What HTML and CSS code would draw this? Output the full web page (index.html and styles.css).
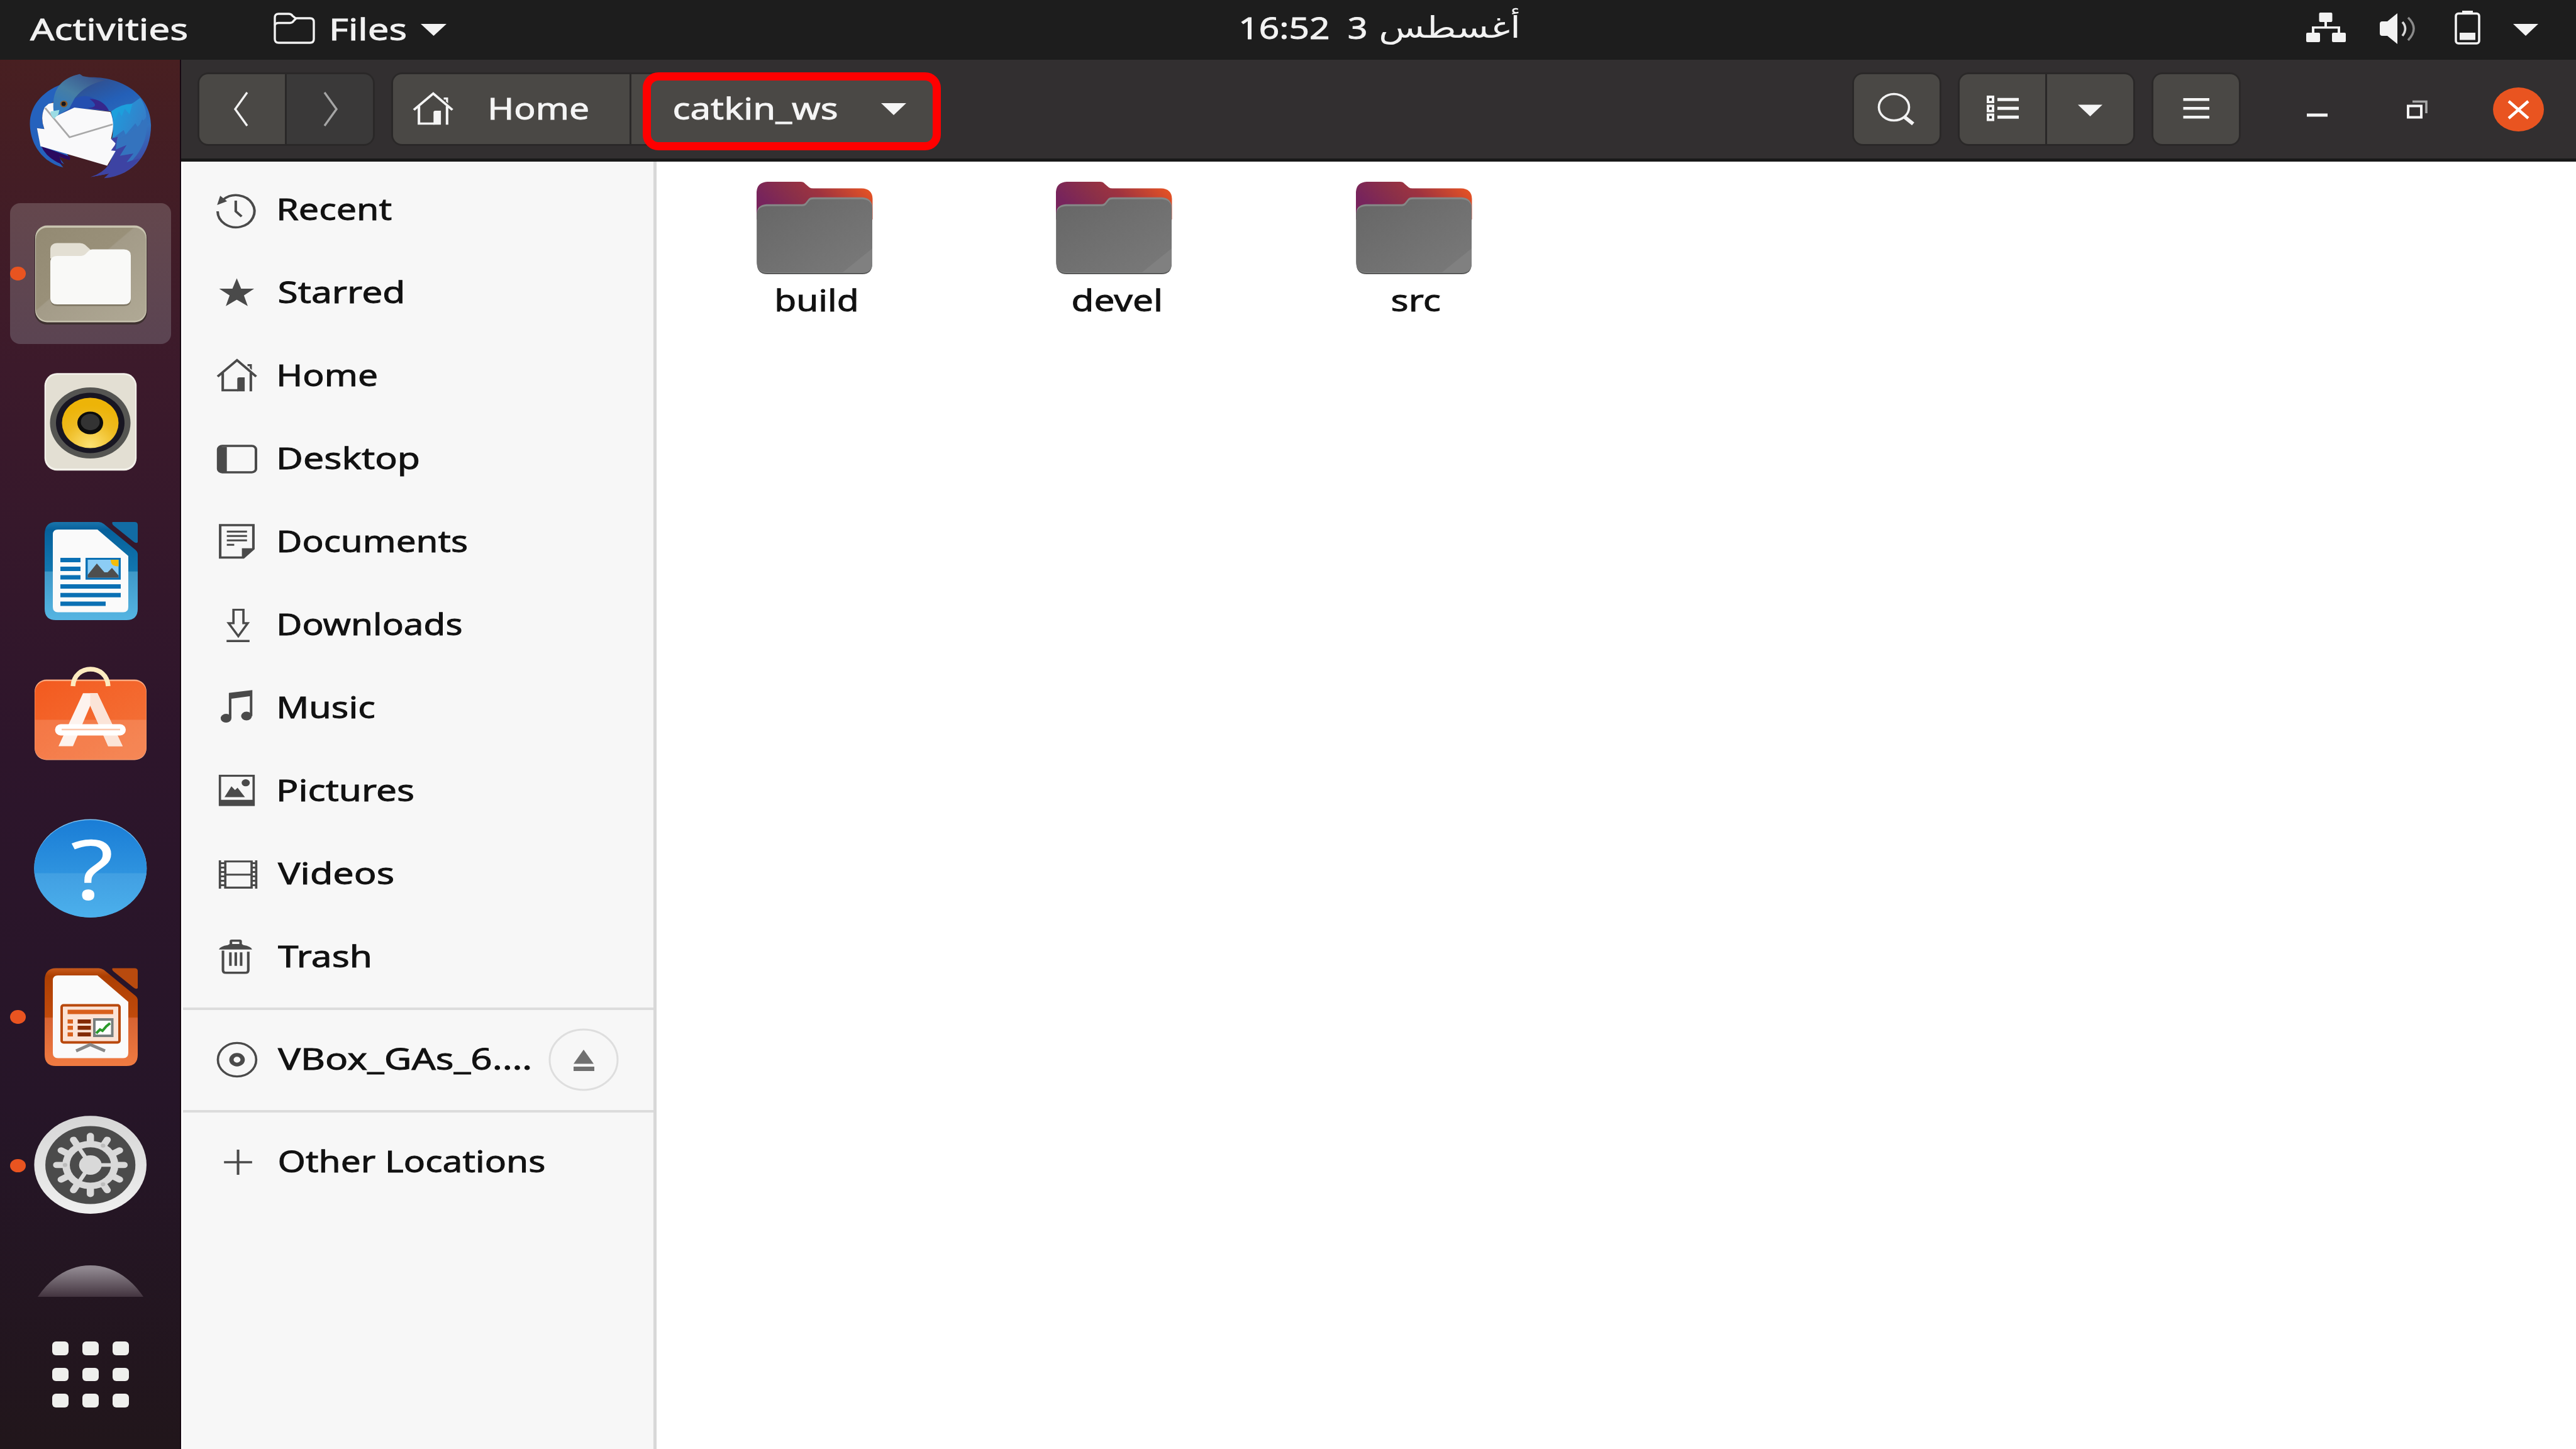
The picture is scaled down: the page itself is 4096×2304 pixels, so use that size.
FILE: index.html
```html
<!DOCTYPE html>
<html lang="en">
<head>
<meta charset="utf-8">
<title>catkin_ws</title>
<link rel="stylesheet" href="styles.css">
</head>
<body>
<header class="topbar">
  <span class="label activities" data-w="251">Activities</span>
  <svg class="app-icon" width="66" height="50" viewBox="0 0 66 50"><g fill="none" stroke="#f2f2f2" stroke-width="3.4"><path d="M2 42V8Q2 2 8 2H24Q28 2 30 5L35 9H58Q64 9 64 15V42Q64 48 58 48H8Q2 48 2 42Z"/><path d="M2 20Q3 16.500 8 16.500H26Q30 16.500 32 13L36 9"/></g></svg>
  <span class="label" data-w="119">Files</span>
  <svg class="app-caret" width="41" height="19" viewBox="0 0 41 19"><path d="M0 0H41L20.500 19Z" fill="#f2f2f2"/></svg>
  <div class="clock">
    <span class="label" data-w="140">16:52</span>
    <span class="label" data-w="29">3</span>
    <span class="label arabic" data-w="221" lang="ar">أغسطس</span>
  </div>
  <div class="tray">
    <svg width="63" height="94" viewBox="0 0 63 94" fill="#f2f2f2"><rect x="20.500" y="20" width="21" height="15" rx="2"/><rect x="0" y="52" width="22" height="15" rx="2"/><rect x="41" y="52" width="22" height="15" rx="2"/><path d="M29 34h4v8h21v11h-4v-7.500H13V53H9V42h20z"/></svg>
    <svg width="61" height="94" viewBox="0 0 61 94"><path d="M1 38Q1 34 5 34H13L29 21V70L13 57H5Q1 57 1 53Z" fill="#f2f2f2"/><path d="M37 35Q46 45 37 57" fill="none" stroke="#d8d8d8" stroke-width="3.600"/><path d="M46 28Q64 45 46 64" fill="none" stroke="#8a8a8a" stroke-width="3.600"/></svg>
    <svg width="41" height="94" viewBox="0 0 41 94"><path d="M12 21V17H29V21" fill="#f2f2f2"/><rect x="2" y="21.500" width="37" height="47.500" rx="4" fill="none" stroke="#f2f2f2" stroke-width="3.600"/><rect x="8" y="52" width="25" height="11.500" fill="#f2f2f2"/></svg>
    <svg width="40" height="94" viewBox="0 0 40 94"><path d="M0 38H40L20 57Z" fill="#f2f2f2"/></svg>
  </div>
</header>
<div class="desktop">
  <nav class="dock">
    <div class="tile">
      <svg width="214" height="186" viewBox="0 0 690 600">
        <defs>
          <linearGradient id="tb-body" x1="0.300" y1="0" x2="0.700" y2="1"><stop offset="0" stop-color="#35497f"/><stop offset=".32" stop-color="#2460b8"/><stop offset=".65" stop-color="#3374c0"/><stop offset="1" stop-color="#4040a0"/></linearGradient>
          <linearGradient id="tb-head" x1="0.800" y1="0" x2="0.100" y2="1"><stop offset="0" stop-color="#39508a"/><stop offset=".5" stop-color="#467ea4"/><stop offset="1" stop-color="#2d78c4"/></linearGradient>
          <linearGradient id="tb-wing" x1="0" y1="0" x2="1" y2="0.400"><stop offset="0" stop-color="#1ba0e0"/><stop offset="1" stop-color="#357fc8"/></linearGradient>
        </defs>
        <path d="M195 90C90 130 30 210 34 300C38 410 110 495 205 517L175 480L210 500L180 462L240 475L215 430L90 405L70 315L108 320Q85 260 110 210L155 180Z" fill="#2562bd"/>
        <path d="M92 408L240 462L238 480L185 462L200 502Q120 470 92 408Z" fill="#2a0a60"/>
        <path d="M155 180Q180 60 290 38L310 55C510 40 655 150 655 300C655 450 560 560 415 572L440 548L345 566Q410 550 440 500L470 430L450 230L250 210L170 250Z" fill="url(#tb-body)"/>
        <path d="M245 175Q310 130 370 168Q425 190 440 225L260 212L170 255Z" fill="#244fb0"/>
        <path d="M340 165Q410 165 440 228L330 212Q400 208 340 165Z" fill="#36278c"/>
        <path d="M130 190L155 185L165 255L262 210L447 232Q470 290 455 345L450 370L485 365L470 400L475 430L430 508L88 408L70 315L108 320Q85 260 110 208Z" fill="#f9f9fa"/>
        <path d="M112 212L237 362L458 296" fill="none" stroke="#a8a8a8" stroke-width="9"/>
        <path d="M450 230Q540 210 600 160Q640 220 628 290L610 270L590 315L575 290L525 348L515 325L455 370Q470 280 450 230Z" fill="url(#tb-wing)"/>
        <path d="M450 230Q500 190 560 190L545 245L520 215L505 255L490 228L468 278Z" fill="#1d9fdc"/>
        <path d="M450 370L485 360L475 420L530 402L500 455L570 445L530 490L600 470Q520 560 415 572L440 548L345 566Q410 545 440 500L475 432L450 430L475 395Z" fill="#3d43a3"/>
        <path d="M480 375Q560 350 630 260Q650 380 560 480L530 490L565 445L495 457L530 402L475 425Z" fill="#3473be"/>
        <path d="M155 225Q140 70 290 38L305 48L420 70Q320 90 265 160L235 215L175 250Z" fill="url(#tb-head)"/>
        <path d="M140 230L185 222L180 245L158 267Q138 250 140 230Z" fill="#9bdce4"/>
        <ellipse cx="208" cy="191" rx="19" ry="17" fill="#8b5a28"/><ellipse cx="207" cy="191" rx="11" ry="11" fill="#17171c"/>
      </svg>
    </div>
    <div class="tile tile-active"><i class="dot"></i>
      <svg width="198" height="168" viewBox="0 0 198 168">
        <defs><linearGradient id="files" x1="0" y1="0" x2="1" y2="1"><stop offset="0" stop-color="#938a73"/><stop offset=".44" stop-color="#999079"/><stop offset=".45" stop-color="#a39b88"/><stop offset="1" stop-color="#b0a995"/></linearGradient></defs>
        <rect x="10" y="8" width="179" height="157" rx="20" fill="#3e3130"/>
        <rect x="11" y="7.500" width="177" height="154" rx="19" fill="#c9c4b0"/><rect x="12" y="11" width="175" height="148" rx="18" fill="url(#files)"/>
        <path d="M35 124V46Q35 37 46 36H82Q87 36 90 39L99 47H151Q163 47 163 56V126Q163 135.500 152 135.500H46Q35 135.500 35 124Z" fill="#7d7562"/>
        <path d="M35 60V46Q35 36 46 35.500H82Q87 35.500 90 38L100 47L92 62Z" fill="#e3dfd3"/>
        <path d="M35 123V66Q35 56 46 56H84Q88 56 91 53L95 49Q98 45.500 102 45.500H152Q163 46 163 55V123Q163 133 152 133H46Q35 133 35 123Z" fill="#f9f9f7"/>
      </svg>
    </div>
    <div class="tile">
      <svg width="198" height="168" viewBox="0 0 198 168">
        <defs><radialGradient id="cone" cx=".5" cy=".95" r=".8"><stop offset="0" stop-color="#fde272"/><stop offset=".6" stop-color="#eebb22"/><stop offset="1" stop-color="#edb408"/></radialGradient></defs>
        <rect x="25.700" y="6.300" width="146.500" height="155" rx="20" fill="#f3f1ea"/><rect x="28" y="9" width="142" height="149" rx="18" fill="#e3dfd3"/>
        <ellipse cx="98.500" cy="85.500" rx="64" ry="56.500" fill="#555552"/><ellipse cx="98.500" cy="85.500" rx="54.500" ry="48" fill="#181622"/>
        <ellipse cx="98.500" cy="85.500" rx="45" ry="40" fill="url(#cone)"/><ellipse cx="98.500" cy="85.500" rx="20.500" ry="18" fill="#0c0c0c"/><ellipse cx="98.500" cy="84" rx="15" ry="13" fill="#333"/>
      </svg>
    </div>
    <div class="tile">
      <svg width="198" height="168" viewBox="0 0 198 168">
        <defs><linearGradient id="writer" x1="0" y1="0" x2="0" y2="1"><stop offset="0" stop-color="#1b75ab"/><stop offset=".08" stop-color="#06609b"/><stop offset=".5" stop-color="#1277b0"/><stop offset=".51" stop-color="#3f98c8"/><stop offset="1" stop-color="#55b5e2"/></linearGradient></defs>
        <path d="M26 26Q26 6 44 6H112Q116 6 120 9L170 50Q174 53 174 58V144Q174 162 156 162H44Q26 162 26 144Z" fill="url(#writer)"/>
        <path d="M134 6H169Q174 6 174 11V38Q172 41 167 37L136 12Q132 8 134 6Z" fill="#126ca4"/>
        <path d="M39 26Q39 18 47 18H110L159 60V141Q159 149.500 151 149.500H47Q39 149.500 39 141Z" fill="#fafafa"/>
        <g fill="#0a70b4"><path d="M51 63h32v7H51zM51 77h32v7H51zM51 90.500h32v7H51zM51 105h96v7H51zM51 118.700h96v7H51zM51 132.500h72v7H51z"/><rect x="91" y="63" width="56" height="34.700"/></g>
        <rect x="94.500" y="66" width="49" height="28.500" fill="#8ccdf5"/><path d="M131 66h12.500v10.500Q131 77 131 66Z" fill="#f5bd0c"/><path d="M94.500 94.500V90L109 72L121 86L126 86L133 79L143.500 91V94.500Z" fill="#4e4e4e"/>
      </svg>
    </div>
    <div class="tile">
      <svg width="198" height="168" viewBox="0 0 198 168">
        <defs><linearGradient id="soft" x1="0" y1="0" x2="1" y2="1"><stop offset="0" stop-color="#f35a1f"/><stop offset="1" stop-color="#f4753c"/></linearGradient></defs>
        <rect x="10" y="20.500" width="178" height="128" rx="19" fill="#fbaa80"/><rect x="10.500" y="23" width="177" height="124.500" rx="18" fill="url(#soft)"/>
        <path d="M10.500 84.500H187.500V130Q187.500 147.500 170 147.500H28Q10.500 147.500 10.500 130Z" fill="#fff" opacity=".14"/>
        <path d="M71 31C73 -5 125 -5 127 31" fill="none" stroke="#fdebc0" stroke-width="7.500"/>
        <path d="M87 42.300H110L150 126.500H127L98.500 62L71 126.500H48Z" fill="#fdf3ee"/><path d="M98.500 42.300H110L150 126.500H127L98.500 62Z" fill="#fbe4d8"/>
        <rect x="42.500" y="91.500" width="112.500" height="18" rx="9" fill="#fff"/><path d="M53 100H146" stroke="#fbc8ae" stroke-width="2.500"/>
      </svg>
    </div>
    <div class="tile">
      <svg class="help" width="198" height="168" viewBox="0 0 198 168">
        <defs><linearGradient id="help" x1="0" y1="0" x2="0" y2="1"><stop offset="0" stop-color="#1a7dd6"/><stop offset=".54" stop-color="#2e93df"/><stop offset=".55" stop-color="#419fe2"/><stop offset="1" stop-color="#4bb0ec"/></linearGradient></defs>
        <ellipse cx="98.800" cy="83.500" rx="89.500" ry="78" fill="#7cc2f0"/><ellipse cx="98.800" cy="84.500" rx="89.500" ry="77.500" fill="url(#help)"/>
        <text class="help-mark" transform="translate(101.500 133) scale(1.200 1)" text-anchor="middle">?</text>
      </svg>
    </div>
    <div class="tile"><i class="dot"></i>
      <svg width="198" height="168" viewBox="0 0 198 168">
        <defs><linearGradient id="impress" x1="0" y1="0" x2="0" y2="1"><stop offset="0" stop-color="#c75a1c"/><stop offset=".08" stop-color="#ad3f02"/><stop offset=".5" stop-color="#c04a0c"/><stop offset=".51" stop-color="#d76332"/><stop offset="1" stop-color="#f07b42"/></linearGradient></defs>
        <path d="M26 26Q26 6.500 44 6.500H112Q116 6.500 120 9L170 50Q174 53 174 58V144Q174 162 156 162H44Q26 162 26 144Z" fill="url(#impress)"/>
        <path d="M134 6.500H169Q174 6.500 174 11V38Q172 41 167 37L136 12Q132 8 134 6.500Z" fill="#b84a0e"/>
        <path d="M39 26Q39 18 47 18H110L159 60V141Q159 149.500 151 149.500H47Q39 149.500 39 141Z" fill="#fafafa"/>
        <rect x="53" y="65.500" width="92" height="59" rx="3" fill="#fbe3d6" stroke="#b8480c" stroke-width="4"/>
        <g fill="#d9601c"><path d="M62.500 72.500h72.500v7H62.500zM62.500 88h8.500v6.500h-8.500zM62.500 98h8.500v6.500h-8.500zM62.500 108.500h8.500v6.500h-8.500z"/></g>
        <path d="M78.500 88h21v6.500h-21zM78.500 98h21v6.500h-21zM78.500 108.500h21v6.500h-21z" fill="#832a05"/>
        <rect x="105" y="88" width="28.500" height="26" fill="#fff" stroke="#777e7e" stroke-width="4"/><path d="M108 110L114 104L118 106L124 99L130 94" fill="none" stroke="#2b9a2b" stroke-width="4"/>
        <path d="M76 138L98.500 128L122 138" fill="none" stroke="#878787" stroke-width="5"/>
      </svg>
    </div>
    <div class="tile"><i class="dot"></i>
      <svg width="214" height="186" viewBox="0 0 690 600">
        <defs><linearGradient id="ring" x1="0" y1="0" x2="0" y2="1"><stop offset="0" stop-color="#d6d6d6"/><stop offset="1" stop-color="#efefef"/></linearGradient></defs>
        <ellipse cx="344" cy="297" rx="288" ry="251" fill="url(#ring)"/><ellipse cx="344" cy="298" rx="231" ry="200" fill="#4b4b4b"/>
        <g transform="translate(344 298) scale(1.160 1)" fill="#d9d9d9">
          <g stroke="#d9d9d9" stroke-width="32" stroke-linecap="round"><path d="M-149 0H149M0 -149V149M-129 -74.500L129 74.500M-129 74.500L129 -74.500M-74.500 -129L74.500 129M-74.500 129L74.500 -129"/></g>
          <circle r="124"/><circle r="91" fill="#4b4b4b"/><circle r="50"/>
          <path d="M0 0H95M0 0L-48 -83M0 0L-48 83" stroke="#d9d9d9" stroke-width="19"/>
          <g fill="#bcbcbc"><circle cx="-112" cy="0" r="10"/><circle cx="56" cy="-99" r="10"/><circle cx="56" cy="99" r="10"/></g>
        </g>
      </svg>
    </div>
    <div class="tile tile-cut">
      <svg width="198" height="56" viewBox="0 0 198 56">
        <defs><linearGradient id="bin" x1="0" y1="0" x2="0" y2="1"><stop offset=".1" stop-color="#8f878f"/><stop offset="1" stop-color="#43343f"/></linearGradient></defs>
        <path d="M15 56C38 22 68 6 98.800 6S160 22 183 56Z" fill="url(#bin)"/>
      </svg>
    </div>
    <div class="apps"><i></i><i></i><i></i><i></i><i></i><i></i><i></i><i></i><i></i></div>
  </nav>
  <section class="window">
    <header class="headerbar">
      <div class="group nav">
        <div class="btn back"><svg width="136" height="111" viewBox="0 0 136 111"><path d="M76 29L57 55.500L76 82" fill="none" stroke="#f2f2f2" stroke-width="3.400"/></svg></div>
        <div class="btn btn-off"><svg width="137" height="111" viewBox="0 0 137 111"><path d="M60 29L79 55.500L60 82" fill="none" stroke="#a5a5a5" stroke-width="3.400"/></svg></div>
      </div>
      <div class="group pathbar">
        <div class="btn crumb-home">
          <svg width="65" height="56" viewBox="0 0 16 16" preserveAspectRatio="none"><use href="#i-home"/></svg>
          <span class="label" data-w="157">Home</span>
        </div>
        <div class="btn crumb-here">
          <span class="label" data-w="260.600">catkin_ws</span>
          <svg width="40" height="19" viewBox="0 0 40 19"><path d="M0 0H40L20 19Z" fill="#f5f5f5"/></svg>
        </div>
        <div class="marker"></div>
      </div>
      <div class="actions">
        <div class="group"><div class="btn sq"><svg width="136" height="111" viewBox="0 0 136 111"><g fill="none" stroke="#f2f2f2"><ellipse cx="63.500" cy="52.500" rx="24" ry="21" stroke-width="3.600"/><path d="M79 67L94 79" stroke-width="6"/></g></svg></div></div>
        <div class="group">
          <div class="btn sq"><svg width="136" height="111" viewBox="0 0 136 111"><g fill="#f5f5f5"><rect x="43" y="34" width="12" height="12"/><rect x="43" y="48.500" width="12" height="12"/><rect x="43" y="62.500" width="12" height="12"/><path d="M60 37.700h34v5H60zM60 51.700h34v5H60zM60 65.700h34v5H60z"/></g><path d="M47 38.200h4v4h-4zM47 52.500h4v4h-4zM47 66.500h4v4h-4z" fill="#333"/></svg></div>
          <div class="btn sq"><svg width="137" height="111" viewBox="0 0 137 111"><path d="M49 48.500H88L68.500 67Z" fill="#f5f5f5"/></svg></div>
        </div>
        <div class="group"><div class="btn sq"><svg width="136" height="111" viewBox="0 0 136 111"><path d="M47.500 38h41.500v4.500H47.500zM47.500 52h41.500v4.500H47.500zM47.500 66h41.500v4.500H47.500z" fill="#f5f5f5"/></svg></div></div>
        <div class="controls">
          <svg width="33" height="111" viewBox="0 0 33 111"><path d="M0 62.500H33V67.500H0Z" fill="#f5f5f5"/></svg>
          <svg width="33" height="111" viewBox="0 0 33 111"><rect x="2" y="50.500" width="21" height="18" fill="none" stroke="#f5f5f5" stroke-width="4"/><path d="M9 43.500H31V62" fill="none" stroke="#a8a8a8" stroke-width="3.600"/></svg>
          <svg width="81" height="111" viewBox="0 0 81 111"><ellipse cx="40.500" cy="56" rx="40.500" ry="35" fill="#e95420"/><path d="M25 43L56 70M56 43L25 70" stroke="#fff" stroke-width="4.500"/></svg>
        </div>
      </div>
    </header>
    <div class="body">
      <aside class="sidebar">
        <div class="row"><svg class="icon" viewBox="0 0 16 16" preserveAspectRatio="none"><g fill="none" stroke="#4a4a4a"><path d="M2.800 3.200A7.200 7.300 0 1 1 .5 8.600"/><path d="M7.600 3.700V8.600L9.900 10.900"/></g><path d="M1.500 1.500L.3 5.700L4.200 4Z" fill="#4a4a4a"/></svg><span class="label" data-w="181">Recent</span></div>
        <div class="row"><svg class="icon" viewBox="0 0 16 16" preserveAspectRatio="none"><path fill="#4a4a4a" d="M8 1.300L9.700 6H14.800L10.800 9.100L12.300 13.900L8 11L3.700 13.900L5.200 9.100L1.100 6H6.300Z"/></svg><span class="label" data-w="198.500">Starred</span></div>
        <div class="row"><svg class="icon dark" viewBox="0 0 16 16" preserveAspectRatio="none"><g id="i-home"><path d="M.5 8.200L8.100 .8L15.600 8.200M2.500 6.600V14.400H8.500M13.500 6.600V14.900" fill="none" stroke="currentColor"/><path d="M8.200 14.900V9.300Q8.200 8.600 9 8.600H11.100V14.900Z M12.200 2.600h1.700v2.600l-.8-.8v-.9h-.9z" fill="currentColor"/></g></svg><span class="label" data-w="157">Home</span></div>
        <div class="row"><svg class="icon" viewBox="0 0 16 16" preserveAspectRatio="none"><rect x=".7" y="2" width="14.800" height="12" rx="1.600" fill="none" stroke="#4a4a4a"/><path d="M.7 2.500H4.100V14H1Z" fill="#4a4a4a"/></svg><span class="label" data-w="223.500">Desktop</span></div>
        <div class="row"><svg class="icon" viewBox="0 0 16 16" preserveAspectRatio="none"><path d="M1.500 .3H14.500V11L10.600 15H1.500Z" fill="none" stroke="#4a4a4a"/><path d="M10 15V10.800H14.600Z" fill="#4a4a4a"/><path d="M4.100 3.200H12M4.100 5.200H12M4.100 7.200H12M4.100 9.200H7" stroke="#4a4a4a" stroke-width=".9"/></svg><span class="label" data-w="300">Documents</span></div>
        <div class="row"><svg class="icon" viewBox="0 0 16 16" preserveAspectRatio="none"><path d="M6.700 1H10.600V7.100H12.300L8.600 13L4.800 7.100H6.700Z" fill="none" stroke="#4a4a4a" stroke-width=".9"/><path d="M4 15.200H13" stroke="#4a4a4a"/></svg><span class="label" data-w="291.500">Downloads</span></div>
        <div class="row"><svg class="icon" viewBox="0 0 16 16" preserveAspectRatio="none"><g fill="#4a4a4a"><ellipse cx="3.800" cy="12.600" rx="2.100" ry="2"/><ellipse cx="11.800" cy="11.600" rx="2.100" ry="2"/><path d="M4.900 1.100L14.100 -.2V11.600H13.100V2.600L5.900 3.700V12.600H4.900Z"/></g></svg><span class="label" data-w="154">Music</span></div>
        <div class="row"><svg class="icon" viewBox="0 0 16 16" preserveAspectRatio="none"><rect x="1.400" y="1" width="13.200" height="13.200" fill="none" stroke="#4a4a4a" stroke-width=".9"/><g fill="#4a4a4a"><path d="M1 11.900H15V14.700H1ZM3.200 10.700L5.900 5.800L7.300 7.500L8.300 6.400L11.200 10.700Z"/><circle cx="11.500" cy="4.200" r="1.600"/></g></svg><span class="label" data-w="215">Pictures</span></div>
        <div class="row"><svg class="icon" viewBox="0 0 16 16" preserveAspectRatio="none"><g fill="none" stroke="#4a4a4a" stroke-width=".9"><path d="M3.500 2.200H13.800V14.100H3.500ZM3.500 8.200H13.800"/><path d="M1.400 1.700V14.600M15.600 1.700V14.600"/><path d="M1.400 3H3.500M1.400 5H3.500M1.400 7H3.500M1.400 9H3.500M1.400 11H3.500M1.400 13H3.500M13.800 3H15.600M13.800 5H15.600M13.800 7H15.600M13.800 9H15.600M13.800 11H15.600M13.800 13H15.600"/></g></svg><span class="label wide-start" data-w="185">Videos</span></div>
        <div class="row"><svg class="icon" viewBox="0 0 16 16" preserveAspectRatio="none"><path d="M1 4.500Q1.500 3 4.500 2.500L5.200 2V.8Q5.200 0 6 0H9.200Q10 0 10 .8V2L10.600 2.500Q13.500 3 14 4.500ZM6.200 1V2H9V1Z" fill="#4a4a4a" fill-rule="evenodd"/><path d="M2.600 5V13.900Q2.600 15.100 3.800 15.100H11.300Q12.500 15.100 12.500 13.900V5.500" fill="none" stroke="#4a4a4a"/><path d="M5.500 5.800V11.900M7.600 5.800V11.900M9.700 5.800V11.900" stroke="#4a4a4a"/></svg><span class="label wide-start" data-w="148">Trash</span></div>
        <hr>
        <div class="row"><svg class="icon" viewBox="0 0 16 16" preserveAspectRatio="none"><ellipse cx="8.100" cy="8" rx="7.500" ry="7.600" fill="none" stroke="#4a4a4a" stroke-width=".9"/><circle cx="8.100" cy="8" r="2.200" fill="none" stroke="#4a4a4a" stroke-width="1.700"/></svg><span class="label wide-start" data-w="402">VBox_GAs_6.…</span>
          <svg class="eject" width="112" height="100" viewBox="0 0 112 100"><ellipse cx="56" cy="50" rx="54" ry="48" fill="none" stroke="#dedede" stroke-width="3"/><path d="M56 34L72 56.500H40ZM40 61H73V68H40Z" fill="#707070"/></svg></div>
        <hr>
        <div class="row"><svg class="icon" viewBox="0 0 16 16" preserveAspectRatio="none"><path d="M8.500 2.300V13.700M3 8H14" stroke="#4a4a4a"/></svg><span class="label" data-w="423.500">Other Locations</span></div>
      </aside>
      <main class="files">
        <div class="file">
          <svg width="185" height="150" viewBox="0 0 185 150"><defs>
            <linearGradient id="fb" x1="0" y1=".3" x2="1" y2="0"><stop offset="0" stop-color="#77245c"/><stop offset=".3" stop-color="#8c3048"/><stop offset=".5" stop-color="#9e3340"/><stop offset=".95" stop-color="#ea5522"/></linearGradient>
            <linearGradient id="ff" x1="0" y1="0" x2="1" y2="1"><stop offset="0" stop-color="#666"/><stop offset="1" stop-color="#7a7a7a"/></linearGradient></defs>
            <g id="folder"><path d="M0 60V16Q1 1 17 0H70Q75 0 77 3L84 9Q86 10.500 90 10.500H167Q184 11 184.500 27V60Z" fill="url(#fb)"/>
            <path d="M.5 130V52Q1 38 16 37H72Q77 37 79 34L83 29Q85 26 90 26H168Q183 27 184 40V130Q184 147 168 147H17Q.5 147 .5 129Z" fill="#565656"/>
            <path d="M.5 128V50Q1 36.500 16 35.700H72Q77 35.700 79 32L83 27Q85 24.800 90 24.800H168Q183 25.500 184 40V129Q184 145 168 145H17Q.5 145 .5 127Z" fill="#858887"/>
            <path d="M.5 127V52Q1 39.500 16 38.700H73Q78 38.700 80 35L84 30Q86 27.800 91 27.800H168Q183 28.500 184 42V128Q184 144 168 144H17Q.5 144 .5 127Z" fill="url(#ff)"/>
            <path d="M184 106V128Q184 144 168 144H137Z" fill="#808080"/></g></svg>
          <span class="label" data-w="128">build</span>
        </div>
        <div class="file"><svg width="185" height="150" viewBox="0 0 185 150"><use href="#folder"/></svg><span class="label" data-w="141">devel</span></div>
        <div class="file"><svg width="185" height="150" viewBox="0 0 185 150"><use href="#folder"/></svg><span class="label" data-w="78">src</span></div>
      </main>
    </div>
  </section>
</div>
<script src="labels.js"></script>
</body>
</html>
```
FILE: labels.js
```js
// Stretches every label horizontally so its ink spans data-w pixels.
const OUTLINE = 2; // room taken by the text stroke and antialiasing
const ctx = document.createElement('canvas').getContext('2d');
for (const el of document.querySelectorAll('.label')) {
  const cs = getComputedStyle(el);
  ctx.font = `${cs.fontWeight} ${cs.fontSize} ${cs.fontFamily}`;
  const text = el.textContent;
  ctx.textAlign = 'left';
  const m = ctx.measureText(text);
  const target = parseFloat(el.dataset.w);
  const scale = (target - OUTLINE) / (m.actualBoundingBoxLeft + m.actualBoundingBoxRight);
  const inner = document.createElement('span');
  inner.className = 'label-ink';
  inner.textContent = text;
  inner.style.transform = `translateX(${m.actualBoundingBoxLeft * scale + OUTLINE / 2}px) scaleX(${scale})`;
  el.style.width = `${target}px`;
  el.replaceChildren(inner);
}
```
FILE: styles.css
```css
* { box-sizing: border-box; }

body {
  margin: 0;
  width: 4096px;
  height: 2304px;
  overflow: hidden;
  display: flex;
  flex-direction: column;
  background: #fff;
  font-family: "Noto Sans", "Open Sans", sans-serif;
  font-size: 47.3px;
  line-height: 64px;
  color: #111;
}

svg { display: block; flex: none; }

.label { display: block; flex: none; height: 64px; white-space: nowrap; }
.label-ink {
  display: inline-block;
  transform-origin: 0 50%;
  -webkit-text-stroke: 0.9px currentColor;
}

/* top panel */
.topbar {
  position: relative;
  flex: none;
  height: 95px;
  display: flex;
  align-items: center;
  padding: 0 60px 1px 47px;
  background: #1d1d1d;
  color: #f2f2f2;
}
.topbar > .label { margin-top: -2px; }
.app-icon { margin: 0 26px 4px 136.5px; }
.app-caret { margin-left: 23px; }
.clock {
  position: absolute;
  left: 1972.5px;
  top: 12px;
  display: flex;
  gap: 0;
}
.clock .label:nth-child(2) { margin-left: 31px; }
.clock .arabic { margin-left: 22.5px; font-family: "DejaVu Sans", sans-serif; }
.clock .arabic .label-ink { -webkit-text-stroke: 0; }
.tray { margin-left: auto; display: flex; }
.tray svg:nth-child(2) { margin-left: 53px; }
.tray svg:nth-child(3) { margin-left: 59px; }
.tray svg:nth-child(4) { margin-left: 52px; }

.desktop { flex: 1; min-height: 0; display: flex; }

/* dock */
.dock {
  flex: none;
  width: 288px;
  display: flex;
  flex-direction: column;
  gap: 13px;
  padding-left: 16px;
  background: linear-gradient(#481f21, #3c1a2b 22%, #2d152b 50%, #261528 75%, #21161b);
  border-right: 2px solid #170912;
}
.tile {
  position: relative;
  flex: none;
  width: 256px;
  height: 223.4px;
  border-radius: 16px;
  display: flex;
  align-items: center;
  justify-content: center;
}
.tile:first-child { margin-top: -8px; }
.tile-active { background: linear-gradient(#64474d, #5b4452); }
.tile-cut { height: 84px; align-items: flex-end; border-radius: 0; }
.dot {
  position: absolute;
  left: 0;
  top: 101px;
  width: 24.500px;
  height: 21.500px;
  border-radius: 50%;
  background: #e95420;
}
.help { overflow: visible; }
.help-mark { font-size: 132px; line-height: 1; fill: #fff; font-family: "Noto Sans", sans-serif; }
.apps {
  margin: auto 0 66px 67px;
  width: 122px;
  display: grid;
  grid-template-columns: repeat(3, 26px);
  gap: 20px 22px;
}
.apps i { height: 21.700px; border-radius: 6px; background: #efefed; }

/* file manager window */
.window { flex: 1; min-width: 0; display: flex; flex-direction: column; }
.headerbar {
  flex: none;
  height: 162px;
  padding: 23px 51px 0 28.500px;
  display: flex;
  align-items: flex-start;
  background: #322f30;
  border-bottom: 5px solid #191919;
  color: #f5f5f5;
}
.headerbar .label { margin-top: -3px; }
.group {
  position: relative;
  display: flex;
  gap: 3px;
  border-radius: 15px;
  background: #2a2828;
  box-shadow: 0 0 0 3px #2a2828;
}
.btn { height: 111px; display: flex; align-items: center; background: #4a4845; }
.btn:first-child { border-radius: 14px 0 0 14px; }
.btn:nth-child(2) { border-radius: 0 14px 14px 0; }
.btn:only-child { border-radius: 14px; }
.btn-off { background: #3a3939; }
.pathbar { margin-left: 32px; }
.crumb-home { width: 376px; padding-left: 31px; }
.crumb-home svg { margin-right: 58.600px; }
.crumb-here { width: 480px; padding-left: 67px; }
.crumb-here svg { margin-left: 69.600px; }
.marker {
  position: absolute;
  left: 397px;
  top: -3px;
  width: 474px;
  height: 124px;
  border: 13px solid #f00;
  border-radius: 25px;
}
.actions { margin-left: auto; display: flex; gap: 32px; }
.controls { display: flex; margin-left: 76px; }
.controls svg:nth-child(2) { margin-left: 126px; }
.controls svg:nth-child(3) { margin-left: 104px; }

.body { flex: 1; min-height: 0; display: flex; }
.sidebar {
  flex: none;
  width: 756px;
  padding-top: 11px;
  background: #f7f7f7;
  border-left: 3px solid #fff;
  border-right: 5px solid #d8d8d8;
}
.row {
  height: 132px;
  display: flex;
  align-items: center;
  padding-left: 52.500px;
}
.row .label { margin: -5px 0 0 34px; }
.row .wide-start { margin-left: 32px; }
.icon { width: 65px; height: 56px; overflow: visible; }
.dark { color: #4a4a4a; }
.eject { margin-left: 29px; }
.sidebar hr { margin: 14px 0 13px; border: 0; height: 4px; background: #dcdcdc; }

.files {
  flex: 1;
  padding: 32px 0 0 13.500px;
  display: flex;
  align-items: flex-start;
}
.file {
  width: 476.300px;
  display: flex;
  flex-direction: column;
  align-items: center;
}
.file .label { margin: 6px 0 0 7px; }
```
